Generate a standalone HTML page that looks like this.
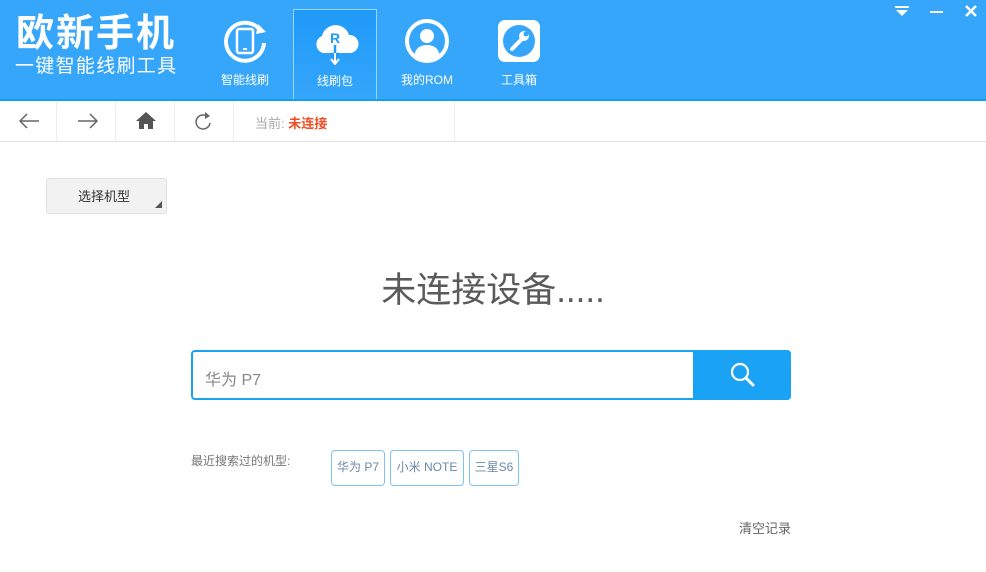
<!DOCTYPE html>
<html><head><meta charset="utf-8"><style>
*{margin:0;padding:0;box-sizing:border-box}
body{width:986px;height:572px;background:#fff;font-family:"Liberation Sans","Noto Sans CJK SC",sans-serif;position:relative;overflow:hidden}
.hd{position:absolute;left:0;top:0;width:986px;height:101px;background:#36a6fb;border-bottom:2px solid #12a0ea}
.logo1{position:absolute;left:16px;top:11px;color:#fff;font-size:38px;font-weight:bold;letter-spacing:2px;line-height:46px}
.logo2{position:absolute;left:15px;top:55px;color:#fff;font-size:19px;line-height:24px;letter-spacing:1.3px}
.nav{position:absolute;top:9px;width:84px;height:90px;color:#fff;font-size:12px;text-align:center}
.nav span{position:absolute;left:0;right:0;top:62px}
.nav svg{position:absolute;left:19px;top:9px}
.sel{border:1px solid #9fd4fc;border-bottom:none;background:linear-gradient(#1e9af8,#35a6fb)}
.tb{position:absolute;top:101px;left:0;width:986px;height:41px;border-bottom:1px solid #e2e2e2}
.tb .c{position:absolute;top:0;height:40px;border-right:1px solid #efefef}
.cur{position:absolute;left:255px;top:113px;font-size:13px;color:#aaa}
.cur b{color:#f04d22}
.btn{position:absolute;left:46px;top:178px;width:121px;height:36px;background:#f2f2f2;border:1px solid #e0e0e0;border-radius:3px;font-size:13px;color:#333;line-height:36px;padding-left:31px}
.btn:after{content:"";position:absolute;right:4px;bottom:5px;border-left:7px solid transparent;border-bottom:7px solid #555}
h1{position:absolute;left:0;width:986px;top:262px;text-align:center;font-size:35px;font-weight:normal;color:#5a5a5a}
.sb{position:absolute;left:191px;top:350px;width:600px;height:50px;border:2px solid #1aa3f4;border-radius:4px;background:#fff}
.sb .t{position:absolute;left:12px;top:14px;font-size:16px;color:#888}
.sb .g{position:absolute;right:-2px;top:-2px;width:98px;height:50px;background:#1aa3f4;border-radius:0 4px 4px 0}
.rl{position:absolute;left:191px;top:452px;font-size:12px;color:#777}
.tag{position:absolute;top:450px;height:36px;border:1px solid #7fc3ef;border-radius:4px;font-size:12px;color:#6a88a8;line-height:32px;text-align:center}
.clr{position:absolute;left:739px;top:518px;font-size:13px;color:#666}
</style></head><body>
<div class="hd">
<div class="logo1">欧新手机</div>
<div class="logo2">一键智能线刷工具</div>
<div class="nav" style="left:203px"><svg width="46" height="46" viewBox="0 0 46 46"><path d="M38 12 A19 19 0 1 0 42 25" fill="none" stroke="#fff" stroke-width="4"/><path d="M36 6 L44 14 L34 16Z" fill="#fff"/><rect x="15" y="11" width="16" height="24" rx="2" fill="none" stroke="#fff" stroke-width="2.5"/><rect x="21" y="30" width="4" height="2" fill="#fff"/></svg><span>智能线刷</span></div>
<div class="nav sel" style="left:293px"><svg width="46" height="46" viewBox="0 0 46 46"><path d="M10 34 A9 9 0 0 1 9 17 A14 14 0 0 1 36 16 A9 9 0 0 1 37 34Z" fill="#fff"/><text x="17" y="24" font-size="14" font-weight="bold" fill="#1e9af8" font-family="Liberation Sans">R</text><path d="M22 26 V38 M18 34 L22 39 L26 34" stroke="#1e9af8" stroke-width="2.5" fill="none"/><path d="M22 34 V44 M18 40 L22 45 L26 40" stroke="#fff" stroke-width="2" fill="none"/></svg><span>线刷包</span></div>
<div class="nav" style="left:385px"><svg width="46" height="46" viewBox="0 0 46 46"><circle cx="23" cy="23" r="20" fill="none" stroke="#fff" stroke-width="4"/><circle cx="23" cy="18" r="7" fill="#fff"/><path d="M10 38 Q12 27 23 27 Q34 27 36 38 Q23 46 10 38Z" fill="#fff"/></svg><span>我的ROM</span></div>
<div class="nav" style="left:477px"><svg width="46" height="46" viewBox="0 0 46 46"><rect x="2" y="2" width="42" height="42" rx="7" fill="#fff"/><circle cx="23" cy="23" r="16" fill="#36a6fb"/><path d="M16 31 L25 22" stroke="#fff" stroke-width="4" stroke-linecap="round"/><circle cx="28" cy="18" r="5" fill="#fff"/><circle cx="30" cy="16" r="2.5" fill="#36a6fb"/></svg><span>工具箱</span></div>
<svg style="position:absolute;left:895px;top:6px" width="14" height="10"><rect x="0" y="0" width="14" height="2" fill="#fff"/><path d="M1 4 H13 L7 10Z" fill="#fff"/></svg>
<div style="position:absolute;left:930px;top:11px;width:13px;height:2px;background:#fff"></div>
<svg style="position:absolute;left:965px;top:5px" width="12" height="12"><path d="M1 1 L11 11 M11 1 L1 11" stroke="#fff" stroke-width="2.5"/></svg>
</div>
<div class="tb">
<div class="c" style="left:0;width:57px"></div><div class="c" style="left:57px;width:59px"></div><div class="c" style="left:116px;width:59px"></div><div class="c" style="left:175px;width:59px"></div><div class="c" style="left:234px;width:221px"></div>
<svg style="position:absolute;left:18px;top:11px" width="22" height="18"><path d="M21 9 H2 M9 2 L2 9 L9 16" stroke="#666" stroke-width="1.5" fill="none"/></svg>
<svg style="position:absolute;left:77px;top:11px" width="22" height="18"><path d="M1 9 H20 M13 2 L20 9 L13 16" stroke="#666" stroke-width="1.5" fill="none"/></svg>
<svg style="position:absolute;left:136px;top:10px" width="20" height="18"><path d="M10 1 L0 10 H3 V18 H8 V13 H12 V18 H17 V10 H20Z" fill="#555"/></svg>
<svg style="position:absolute;left:194px;top:10px" width="18" height="20"><path d="M14 6 A7 7 0 1 0 16 12" fill="none" stroke="#666" stroke-width="1.5"/><path d="M11 1 L16 5 L11 8Z" fill="#666"/></svg>
</div>
<div class="cur">当前: <b>未连接</b></div>
<div class="btn">选择机型</div>
<h1>未连接设备.....</h1>
<div class="sb"><div class="t">华为 P7</div><div class="g"><svg style="position:absolute;left:37px;top:12px" width="26" height="26"><circle cx="10" cy="10" r="8" fill="none" stroke="#fff" stroke-width="2.2"/><path d="M16 16 L23 23" stroke="#fff" stroke-width="3" stroke-linecap="round"/></svg></div></div>
<div class="rl">最近搜索过的机型:</div>
<div class="tag" style="left:331px;width:54px">华为 P7</div>
<div class="tag" style="left:390px;width:74px">小米 NOTE</div>
<div class="tag" style="left:469px;width:50px">三星S6</div>
<div class="clr">清空记录</div>
</body></html>
